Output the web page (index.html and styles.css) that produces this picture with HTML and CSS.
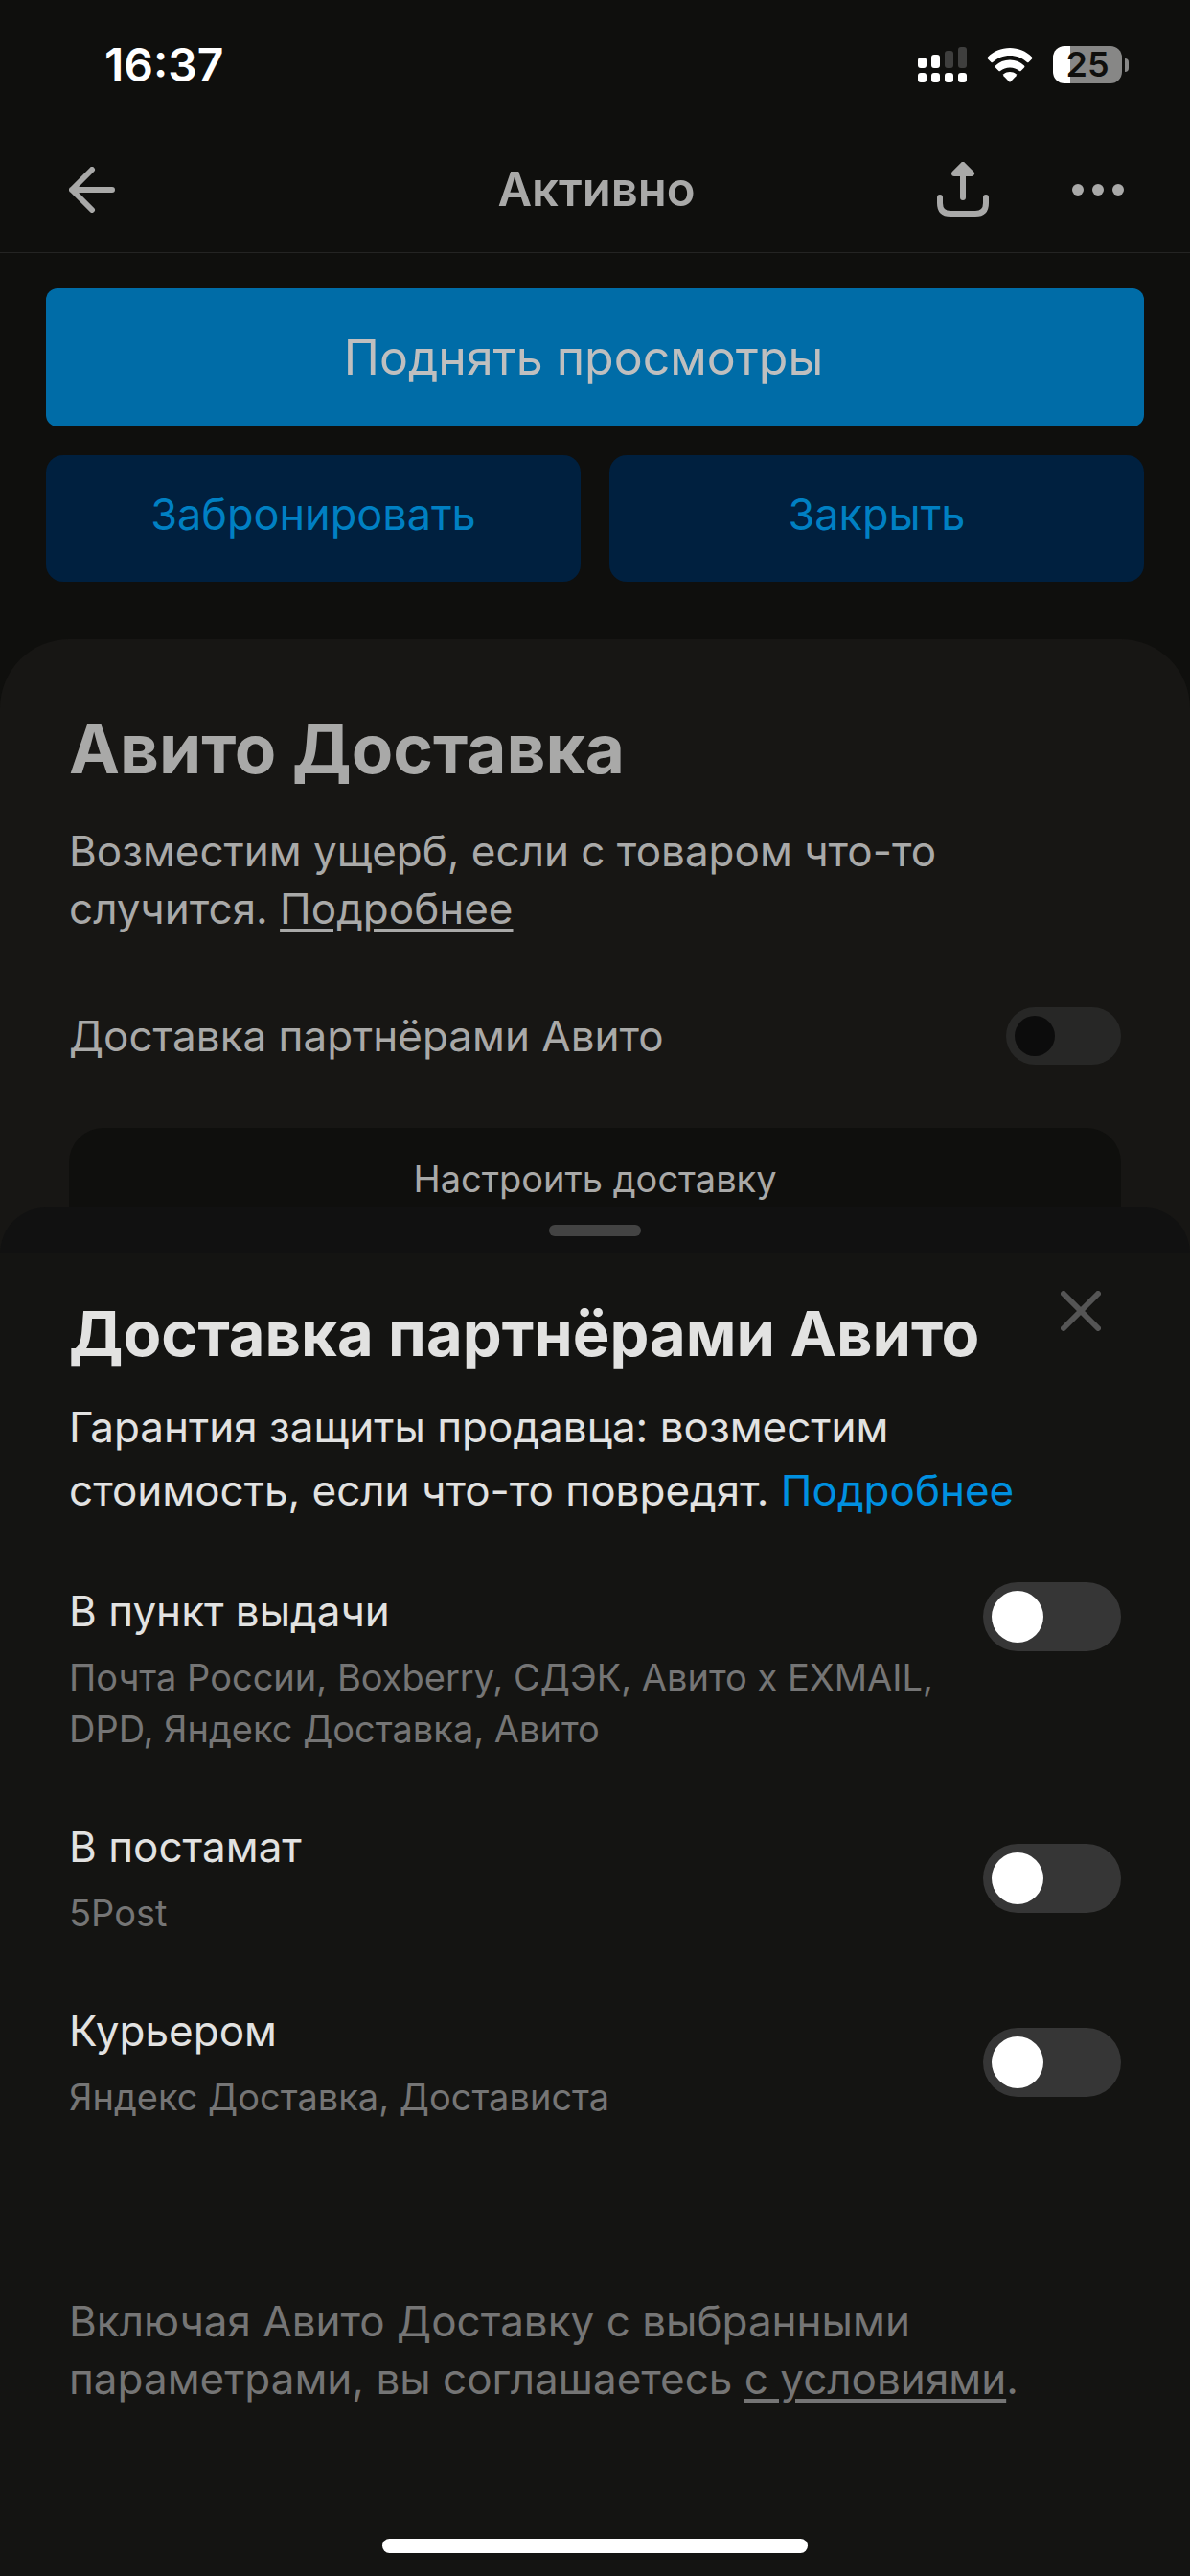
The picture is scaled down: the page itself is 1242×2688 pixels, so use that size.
FILE: index.html
```html
<!DOCTYPE html>
<html lang="ru">
<head>
<meta charset="utf-8">
<meta name="viewport" content="width=device-width, initial-scale=1">
<title>Авито Доставка</title>
<link rel="stylesheet" href="styles.css">
</head>
<body>
<div class="screen">
  <div class="status">
    <time class="status-time">16:37</time>
    <div class="status-icons">
      <svg class="signal" width="51" height="38" viewBox="0 0 51 38" aria-hidden="true">
        <g fill="#fff">
          <rect x="0" y="11" width="9" height="11" rx="3"/><rect x="14" y="8" width="9" height="14" rx="3"/>
          <rect x="0" y="27" width="9" height="10" rx="3"/><rect x="14" y="27" width="9" height="10" rx="3"/>
          <rect x="28" y="27" width="9" height="10" rx="3"/><rect x="42" y="27" width="9" height="10" rx="3"/>
        </g>
        <g fill="#3f3f3e"><rect x="28" y="4" width="9" height="18" rx="3"/><rect x="42" y="0" width="9" height="22" rx="3"/></g>
      </svg>
      <svg class="wifi" width="48" height="36" viewBox="0 0 48 36" aria-hidden="true">
        <g fill="#fff">
          <path d="M24 0C33 0 41 3.500 47 9.500Q48 10.500 47 11.500L43.500 15Q42.800 15.600 42 15C37 10.500 31 8 24 8S11 10.500 6 15Q5.200 15.600 4.500 15L1 11.500Q0 10.500 1 9.500C7 3.500 15 0 24 0Z"/>
          <path d="M24 12.500C30 12.500 35 14.700 39 18.500Q40 19.500 39 20.500L35.500 24Q34.800 24.600 34 24C31 21.700 28 20.500 24 20.500S17 21.700 14 24Q13.200 24.600 12.500 24L9 20.500Q8 19.500 9 18.500C13 14.700 18 12.500 24 12.500Z"/>
          <path d="M24 25C26.500 25 28.700 25.900 30.500 27.300Q31.400 28.200 30.500 29.200L25 35Q24 36 23 35L17.500 29.200Q16.600 28.200 17.500 27.300C19.300 25.900 21.500 25 24 25Z"/>
        </g>
      </svg>
      <div class="battery"><span class="battery-body">25</span><span class="battery-tip"></span></div>
    </div>
  </div>

  <header class="header">
    <button class="icon-button" type="button" aria-label="Назад">
      <svg width="48" height="48" viewBox="0 0 48 48" fill="none" stroke="currentColor" stroke-width="6" stroke-linecap="round" stroke-linejoin="round"><path d="M24 3L3 24L24 45M3 24H45"/></svg>
    </button>
    <h1 class="header-title">Активно</h1>
    <div class="header-actions">
      <button class="icon-button" type="button" aria-label="Поделиться">
        <svg width="54" height="58" viewBox="0 0 54 58" fill="none" stroke="currentColor" stroke-width="6" stroke-linecap="round" stroke-linejoin="round"><path d="M3 37V43Q3 54 14 54H40Q51 54 51 43V37M27 8V37"/><path d="M27 3L36 12H18Z" fill="currentColor"/></svg>
      </button>
      <button class="icon-button" type="button" aria-label="Ещё">
        <svg width="54" height="12" viewBox="0 0 54 12" fill="currentColor"><circle cx="6" cy="6" r="6"/><circle cx="27" cy="6" r="6"/><circle cx="48" cy="6" r="6"/></svg>
      </button>
    </div>
  </header>

  <div class="actions">
    <button class="button button-primary" type="button">Поднять просмотры</button>
    <button class="button button-secondary" type="button">Забронировать</button>
    <button class="button button-secondary" type="button">Закрыть</button>
  </div>

  <section class="card">
    <h2 class="card-title">Авито Доставка</h2>
    <p class="card-text">Возместим ущерб, если с товаром что-то<br>случится. <a href="#">Подробнее</a></p>
    <div class="card-row">
      <label for="partners">Доставка партнёрами Авито</label>
      <input class="switch switch-small" type="checkbox" role="switch" id="partners">
    </div>
    <button class="button-configure" type="button">Настроить доставку</button>
  </section>
</div>

<section class="sheet" role="dialog" aria-labelledby="sheet-title">
  <div class="handle"></div>
  <div class="sheet-head">
    <h2 class="sheet-title" id="sheet-title">Доставка партнёрами Авито</h2>
    <button class="icon-button close" type="button" aria-label="Закрыть">
      <svg width="42" height="42" viewBox="0 0 42 42" fill="none" stroke="currentColor" stroke-width="6" stroke-linecap="round"><path d="M3 3L39 39M39 3L3 39"/></svg>
    </button>
  </div>
  <p class="sheet-text">Гарантия защиты продавца: возместим<br>стоимость, если что-то повредят. <a href="#">Подробнее</a></p>
  <div class="options">
    <div class="option option-top">
      <label class="option-label" for="pickup">В пункт выдачи<small>Почта России, Boxberry, СДЭК, Авито x EXMAIL,<br>DPD, Яндекс Доставка, Авито</small></label>
      <input class="switch" type="checkbox" role="switch" id="pickup">
    </div>
    <div class="option">
      <label class="option-label" for="locker">В постамат<small>5Post</small></label>
      <input class="switch" type="checkbox" role="switch" id="locker">
    </div>
    <div class="option">
      <label class="option-label" for="courier">Курьером<small>Яндекс Доставка, Достависта</small></label>
      <input class="switch" type="checkbox" role="switch" id="courier">
    </div>
  </div>
  <p class="terms">Включая Авито Доставку с выбранными<br>параметрами, вы соглашаетесь <a href="#">с условиями</a>.</p>
  <div class="home-indicator"></div>
</section>
</body>
</html>
```
FILE: styles.css
```css
* {
  box-sizing: border-box;
}

body {
  margin: 0;
  background: #0f0f0d;
  color: #a9a9a8;
  font-family: Inter, Roboto, "Noto Sans", sans-serif;
  font-size: 44px;
  line-height: 60px;
}

h1, h2, p {
  margin: 0;
}

button {
  font: inherit;
  border: 0;
  padding: 0;
}

a {
  color: inherit;
}

.screen {
  height: 100vh;
  overflow: hidden;
  display: flex;
  flex-direction: column;
}

.status {
  display: flex;
  justify-content: space-between;
  align-items: center;
  height: 132px;
  padding: 3px 64px 0 109px;
  color: #fff;
}

.status-time {
  font-size: 48px;
  font-weight: 600;
}

.status-icons {
  display: flex;
  align-items: center;
  gap: 21px;
}

.battery {
  display: flex;
  align-items: center;
  gap: 3px;
}

.battery-body {
  width: 72px;
  height: 39px;
  border-radius: 12px;
  background: linear-gradient(to right, #fff 18px, #878786 18px);
  color: #0f0f0d;
  font-size: 36px;
  font-weight: 600;
  line-height: 39px;
  text-align: center;
}

.battery-tip {
  width: 4px;
  height: 14px;
  border-radius: 0 4px 4px 0;
  background: #878786;
}

.header {
  display: grid;
  grid-template-columns: 1fr auto 1fr;
  align-items: center;
  height: 132px;
  padding: 0 69px 0 72px;
  border-bottom: 1px solid #242423;
}

.header-title {
  font-size: 49px;
  font-weight: 600;
}

.header-actions {
  display: flex;
  justify-content: flex-end;
  align-items: center;
  gap: 87px;
}

.icon-button {
  display: flex;
  justify-self: start;
  background: none;
  color: inherit;
}

.actions {
  display: grid;
  grid-template-columns: 1fr 1fr;
  gap: 30px;
  padding: 37px 48px 60px;
}

.button-primary {
  grid-column: 1 / -1;
  height: 144px;
  padding-right: 24px;
  border-radius: 12px;
  background: #006ca7;
  color: #bfbfbf;
  font-size: 50px;
}

.button-secondary {
  height: 132px;
  padding-bottom: 9px;
  border-radius: 18px;
  background: #00203f;
  color: #0080c3;
  font-size: 45px;
}

.card {
  flex: 1;
  display: flex;
  flex-direction: column;
  padding: 72px 72px 0;
  border-radius: 72px 72px 0 0;
  background: #171614;
}

.card-title {
  font-size: 71px;
  font-weight: 700;
  line-height: 84px;
}

.card-text {
  padding-top: 35px;
}

.card-text a,
.terms a {
  text-decoration-thickness: 4px;
  text-underline-offset: 5px;
}

.card-row {
  display: flex;
  justify-content: space-between;
  align-items: center;
  padding: 73px 0 66px;
}

.button-configure {
  flex: none;
  height: 120px;
  padding-bottom: 15px;
  border-radius: 36px;
  background: #0f0f0d;
  color: inherit;
  font-size: 38px;
}

.switch {
  appearance: none;
  flex: none;
  width: 144px;
  height: 72px;
  margin: 0;
  padding: 9px;
  border-radius: 36px;
  background: #363636;
}

.switch::before {
  content: "";
  display: block;
  width: 54px;
  height: 54px;
  border-radius: 50%;
  background: #fff;
}

.switch:checked {
  background: #0090e0;
}

.switch:checked::before {
  margin-left: auto;
}

.switch-small {
  width: 120px;
  height: 60px;
  background: #272726;
}

.switch-small::before {
  width: 42px;
  height: 42px;
  background: #0c0c0c;
}

.sheet {
  position: fixed;
  left: 0;
  right: 0;
  bottom: 0;
  display: flex;
  flex-direction: column;
  padding: 18px 72px 24px;
  border-radius: 48px 48px 0 0;
  background: linear-gradient(#111 48px, #141412 48px);
  color: #e2e2e1;
}

.handle {
  align-self: center;
  width: 96px;
  height: 12px;
  border-radius: 6px;
  background: #434343;
}

.sheet-head {
  display: flex;
  justify-content: space-between;
  align-items: flex-start;
  padding: 57px 21px 0 0;
}

.sheet-title {
  padding-top: 6px;
  font-size: 65px;
  font-weight: 700;
  line-height: 78px;
}

.close {
  color: #555;
}

.sheet-text {
  padding-top: 25px;
  line-height: 66px;
}

.sheet-text a {
  color: #0090e0;
  text-decoration: none;
}

.options {
  display: flex;
  flex-direction: column;
  gap: 66px;
  padding-top: 63px;
}

.option {
  display: flex;
  justify-content: space-between;
  align-items: center;
}

.option-top {
  align-items: flex-start;
}

.option-label small {
  display: block;
  padding-top: 12px;
  color: #757575;
  font-size: 38px;
  line-height: 54px;
}

.terms {
  padding-top: 177px;
  color: #757575;
}

.home-indicator {
  align-self: center;
  width: 444px;
  height: 15px;
  margin-top: 137px;
  border-radius: 8px;
  background: #fff;
}
```
